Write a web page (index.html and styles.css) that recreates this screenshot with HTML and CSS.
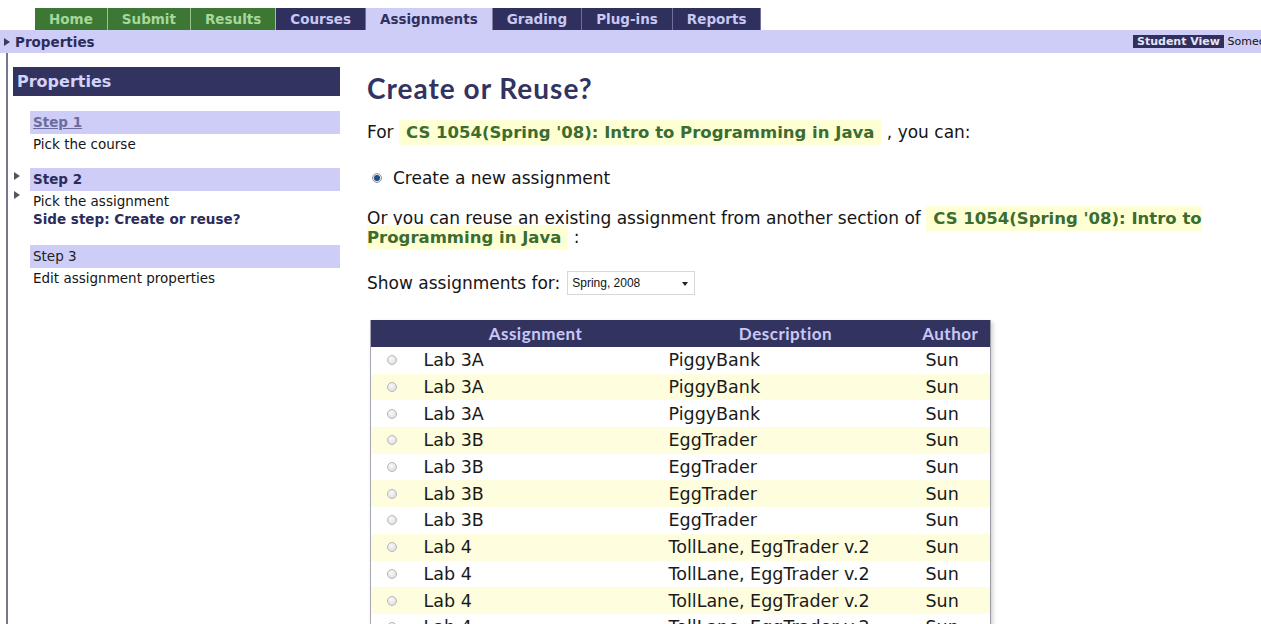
FILE: index.html
```html
<!DOCTYPE html>
<html lang="en">
<head>
<meta charset="utf-8">
<title>Create or Reuse?</title>
<link rel="stylesheet" href="styles.css">
</head>
<body>
<nav class="tabs">
  <a class="tab tab-green">Home</a>
  <a class="tab tab-green">Submit</a>
  <a class="tab tab-green">Results</a>
  <a class="tab tab-navy">Courses</a>
  <a class="tab tab-active">Assignments</a>
  <a class="tab tab-navy">Grading</a>
  <a class="tab tab-navy">Plug-ins</a>
  <a class="tab tab-navy">Reports</a>
</nav>
<div class="crumbbar">
  <div class="crumb"><span class="tri"></span>Properties</div>
  <div class="userbox"><span class="badge">Student View</span> Someone Else</div>
</div>
<div class="page">
  <aside class="sidebar">
    <div class="side-head">Properties</div>
    <div class="step">
      <div class="step-label"><a class="step-link">Step 1</a></div>
      <div class="step-desc">Pick the course</div>
    </div>
    <div class="step step-current">
      <span class="tri tri-side tri-a"></span>
      <span class="tri tri-side tri-b"></span>
      <div class="step-label"><strong>Step 2</strong></div>
      <div class="step-desc">Pick the assignment</div>
      <div class="step-desc"><strong>Side step: Create or reuse?</strong></div>
    </div>
    <div class="step">
      <div class="step-label">Step 3</div>
      <div class="step-desc">Edit assignment properties</div>
    </div>
  </aside>
  <main class="main">
    <h1 class="title">Create or Reuse?</h1>
    <p class="intro">For <span class="course">CS 1054(Spring '08): Intro to Programming in Java</span> , you can:</p>
    <p class="choice"><span class="radio radio-on"></span>Create a new assignment</p>
    <p class="reuse">Or you can reuse an existing assignment from another section of <span class="course">CS 1054(Spring '08): Intro to Programming in Java</span> :</p>
    <p class="filter">Show assignments for: <span class="select">Spring, 2008<span class="caret"></span></span></p>
    <table class="list">
      <thead>
        <tr><th class="c-pick"></th><th class="c-name">Assignment</th><th class="c-desc">Description</th><th class="c-auth">Author</th></tr>
      </thead>
      <tbody>
        <tr><td class="c-pick"><span class="radio"></span></td><td class="c-name">Lab 3A</td><td class="c-desc">PiggyBank</td><td class="c-auth">Sun</td></tr>
        <tr><td class="c-pick"><span class="radio"></span></td><td class="c-name">Lab 3A</td><td class="c-desc">PiggyBank</td><td class="c-auth">Sun</td></tr>
        <tr><td class="c-pick"><span class="radio"></span></td><td class="c-name">Lab 3A</td><td class="c-desc">PiggyBank</td><td class="c-auth">Sun</td></tr>
        <tr><td class="c-pick"><span class="radio"></span></td><td class="c-name">Lab 3B</td><td class="c-desc">EggTrader</td><td class="c-auth">Sun</td></tr>
        <tr><td class="c-pick"><span class="radio"></span></td><td class="c-name">Lab 3B</td><td class="c-desc">EggTrader</td><td class="c-auth">Sun</td></tr>
        <tr><td class="c-pick"><span class="radio"></span></td><td class="c-name">Lab 3B</td><td class="c-desc">EggTrader</td><td class="c-auth">Sun</td></tr>
        <tr><td class="c-pick"><span class="radio"></span></td><td class="c-name">Lab 3B</td><td class="c-desc">EggTrader</td><td class="c-auth">Sun</td></tr>
        <tr><td class="c-pick"><span class="radio"></span></td><td class="c-name">Lab 4</td><td class="c-desc">TollLane, EggTrader v.2</td><td class="c-auth">Sun</td></tr>
        <tr><td class="c-pick"><span class="radio"></span></td><td class="c-name">Lab 4</td><td class="c-desc">TollLane, EggTrader v.2</td><td class="c-auth">Sun</td></tr>
        <tr><td class="c-pick"><span class="radio"></span></td><td class="c-name">Lab 4</td><td class="c-desc">TollLane, EggTrader v.2</td><td class="c-auth">Sun</td></tr>
        <tr><td class="c-pick"><span class="radio"></span></td><td class="c-name">Lab 4</td><td class="c-desc">TollLane, EggTrader v.2</td><td class="c-auth">Sun</td></tr>
        <tr><td class="c-pick"><span class="radio"></span></td><td class="c-name">Lab 4</td><td class="c-desc">TollLane, EggTrader v.2</td><td class="c-auth">Sun</td></tr>
      </tbody>
    </table>
  </main>
</div>
</body>
</html>
```
FILE: styles.css
```css
* { box-sizing: border-box; }

html, body {
  margin: 0;
  background: #fff;
  color: #151515;
  font-family: "DejaVu Sans", Verdana, sans-serif;
  overflow: hidden;
}

/* top navigation tabs */
.tabs {
  display: flex;
  margin: 8px 0 0 35px;
  height: 22px;
}
.tab {
  display: block;
  font-weight: bold;
  font-size: 13.5px;
  line-height: 22px;
  padding: 0 14px;
  border-right: 1px solid #7f7fa0;
  cursor: pointer;
}
.tab-green { background: #3c7733; color: #a6d79c; border-right-color: #9ac490; }
.tab-navy { background: #30305f; color: #c8c8f2; border-right-color: #7070a0; }
.tab-active { background: #cdcdf8; color: #30305f; }

/* breadcrumb bar */
.crumbbar {
  display: flex;
  align-items: center;
  justify-content: space-between;
  height: 23px;
  background: #cdcdf8;
  overflow: hidden;
}
.crumb {
  display: flex;
  align-items: center;
  padding-left: 4px;
  font-weight: bold;
  font-size: 13.5px;
  color: #2c2c5a;
}
.tri {
  display: inline-block;
  width: 0;
  height: 0;
  border-left: 6px solid #3a3a5a;
  border-top: 4.5px solid transparent;
  border-bottom: 4.5px solid transparent;
  margin-right: 5px;
}
.userbox {
  flex: 0 0 128px;
  white-space: nowrap;
  overflow: hidden;
  font-size: 11px;
  color: #111;
}
.badge {
  background: #30305f;
  color: #e4e4f8;
  font-weight: bold;
  padding: 1px 4px;
}

/* page body */
.page {
  display: flex;
  margin-left: 6px;
  border-left: 2px solid #76768e;
  min-height: 600px;
}

.sidebar {
  flex: 0 0 332px;
  padding: 14px 0 0 5px;
}
.side-head {
  background: #33335f;
  color: #d2d2fa;
  font-weight: bold;
  font-size: 16px;
  height: 29px;
  line-height: 29px;
  padding-left: 4px;
}
.step {
  position: relative;
  margin: 15px 0 0 17px;
  font-size: 13.5px;
}
.step + .step { margin-top: 15px; }
.step:last-child { margin-top: 17px; }
.step-label {
  background: #cdcdf8;
  height: 23px;
  line-height: 23px;
  padding-left: 3px;
  color: #222;
}
.step-label strong { color: #2c2c5a; }
.step-link {
  color: #6c6c9c;
  font-weight: bold;
  text-decoration: underline;
}
.step-desc {
  line-height: 18px;
  padding: 1px 0 0 3px;
}
.step-desc + .step-desc { padding-top: 0; }
.step-desc strong { color: #2c2c5a; }
.tri-side {
  position: absolute;
  left: -16px;
  border-left-color: #555566;
}
.tri-a { top: 4px; }
.tri-b { top: 23px; }

/* main content */
.main {
  flex: 0 0 900px;
  padding-left: 27px;
  font-size: 17px;
}
.title {
  margin: 20px 0 0;
  font-family: "Lato", sans-serif;
  font-weight: bold;
  font-size: 28px;
  letter-spacing: 1px;
  line-height: 30px;
  color: #33335f;
}
.main p { margin: 0; }
.intro { margin-top: 17px !important; line-height: 25px; }
.course {
  background: #ffffd4;
  color: #3b6c30;
  font-weight: bold;
  font-size: 16.5px;
  padding: 3px 7px;
}
.choice {
  display: flex;
  align-items: center;
  margin-top: 23px !important;
  line-height: 20px;
}
.choice .radio { margin: 0 11px 0 5px; }
.reuse { margin-top: 21px !important; line-height: 19px; }
.filter {
  display: flex;
  align-items: center;
  margin-top: 24px !important;
  line-height: 24px;
}
.select {
  position: relative;
  display: inline-block;
  width: 128px;
  height: 24px;
  margin-left: 7px;
  border: 1px solid #d8d8d8;
  font-family: "Liberation Sans", Arial, sans-serif;
  font-size: 12px;
  line-height: 22px;
  padding-left: 4px;
  color: #111;
}
.caret {
  position: absolute;
  right: 6px;
  top: 10px;
  border-top: 4px solid #222;
  border-left: 3px solid transparent;
  border-right: 3px solid transparent;
}

.radio {
  display: inline-block;
  width: 10px;
  height: 10px;
  border-radius: 50%;
  border: 1px solid #b8b8b8;
  background: radial-gradient(circle at 40% 35%, #fafafa, #d6d6d6);
}
.radio-on {
  border-color: #9a9aa8;
  background: radial-gradient(circle, #24507e 0 2.5px, #6c8db0 3px, #e6e6ea 3.6px);
}

/* assignment table */
.list {
  margin: 25px 0 0 3px;
  width: 620px;
  border-collapse: collapse;
  border-left: 1px solid #a8a8b4;
  border-right: 1px solid #9a9aa4;
  box-shadow: 2px 2px 4px rgba(0, 0, 0, 0.18);
  table-layout: fixed;
}
.list th {
  background: #33335f;
  color: #c8c8f8;
  font-family: "Lato", sans-serif;
  font-weight: bold;
  font-size: 17px;
  letter-spacing: 0.5px;
  height: 27px;
  text-align: center;
  padding: 0;
}
.list td {
  height: 26.7px;
  padding: 0;
  font-size: 17.5px;
  color: #1a1a1a;
  white-space: nowrap;
}
.list tbody tr:nth-child(even) td { background: #fefedf; }
.c-pick { width: 40px; }
.c-name { width: 250px; }
.c-desc { width: 250px; }
.c-auth { width: 80px; }
td.c-pick { padding-left: 16px !important; line-height: 0; }
td.c-name { padding-left: 13px !important; }
td.c-desc { padding-left: 8px !important; }
td.c-auth { padding-left: 15px !important; }
```
